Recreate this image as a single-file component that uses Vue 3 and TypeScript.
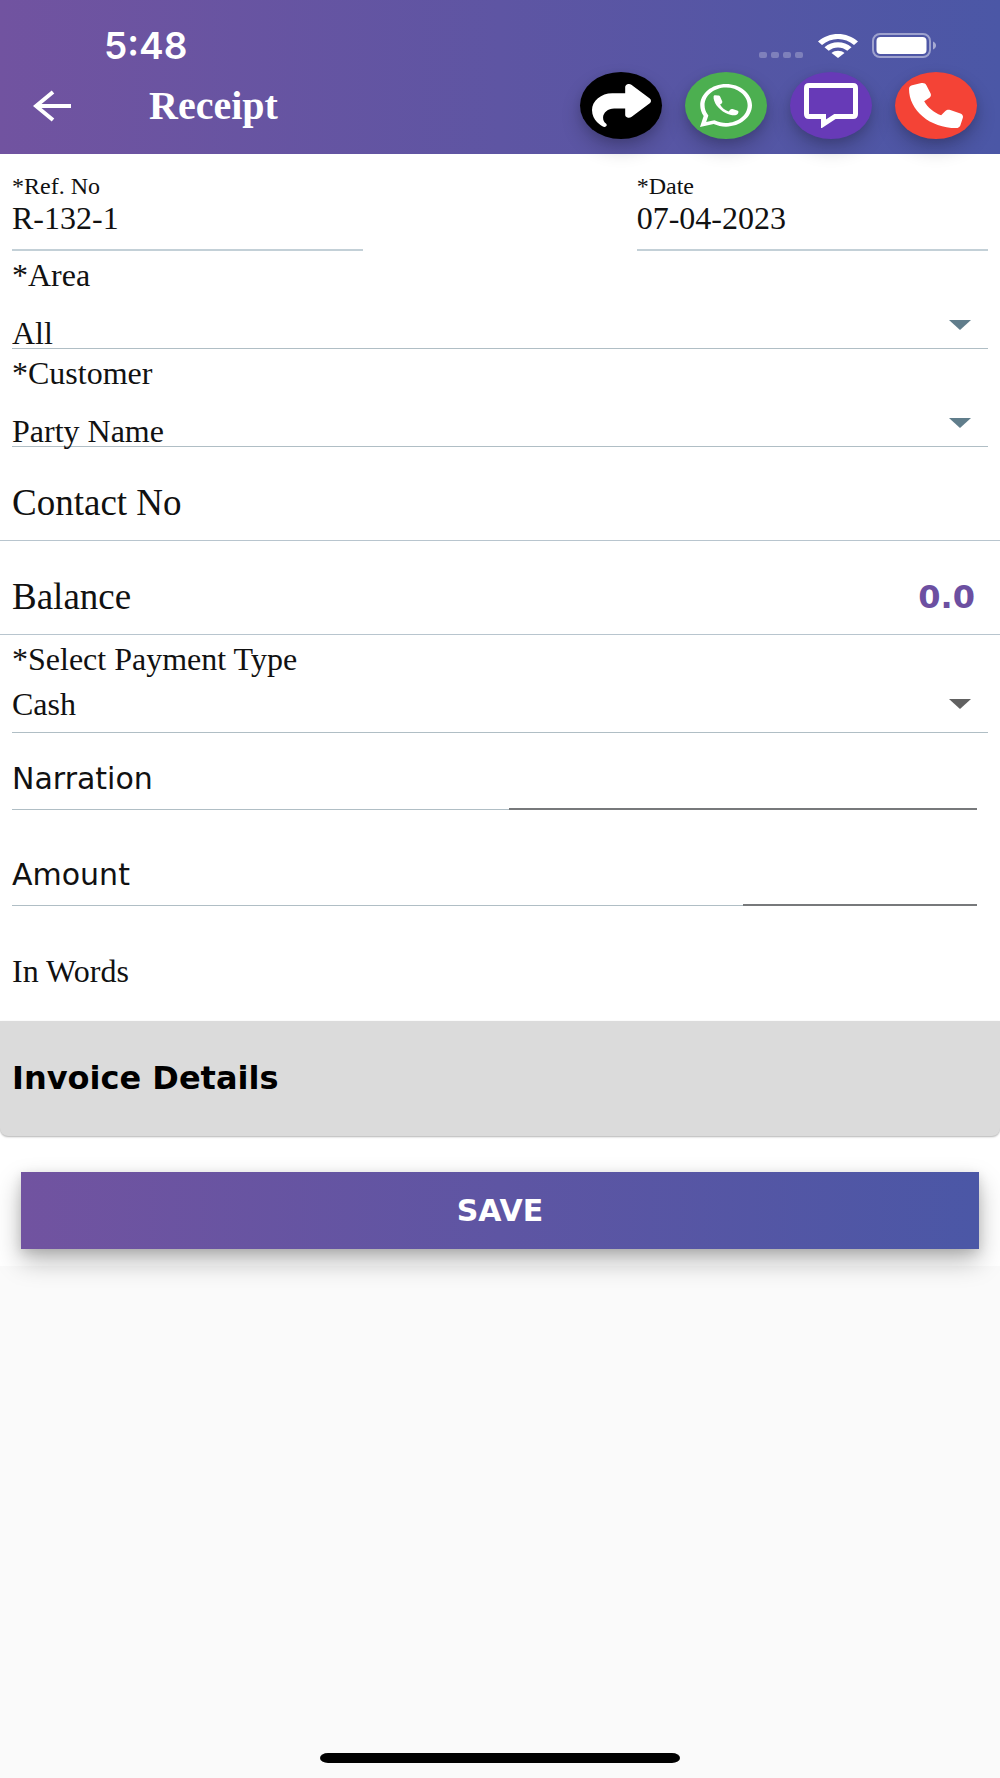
<script setup lang="ts">
import { ref } from 'vue'

const refNo = ref('R-132-1')
const date = ref('07-04-2023')
const area = ref('All')
const customer = ref('Party Name')
const paymentType = ref('Cash')
const narration = ref('')
const amount = ref('')
const balance = ref('0.0')
</script>

<template>
  <div class="screen">
    <header class="header">
      <div class="status">
        <span class="clock">5:48</span>
        <span class="signal" aria-hidden="true"><i></i><i></i><i></i><i></i></span>
        <svg class="wifi" viewBox="0 0 40 24" preserveAspectRatio="none" aria-hidden="true">
          <path d="M0 7.5C11-2.5 29-2.5 40 7.5L36 11C27 3 13 3 4 11Z" />
          <path d="M6.5 13.2C14 6.5 26 6.5 33.5 13.2L29.3 16.8C24 12.3 16 12.3 10.7 16.8Z" />
          <path d="M13.5 19C17 16 23 16 26.5 19L20 24Z" />
        </svg>
        <svg class="battery" viewBox="0 0 64 25" aria-hidden="true">
          <rect x="1" y="1" width="57" height="23" rx="7" fill="none" stroke="#fff" stroke-opacity=".45" stroke-width="2" />
          <rect x="4.5" y="4" width="50" height="17" rx="4" fill="#fff" />
          <path d="M61 8.5C65 10 65 15 61 16.5Z" fill="#fff" fill-opacity=".5" />
        </svg>
      </div>
      <div class="toolbar">
        <button class="back" type="button" aria-label="Back">
          <svg viewBox="0 0 38 32" aria-hidden="true">
            <path d="M20 2 3 16 20 30M3 16H38" fill="none" stroke="#fff" stroke-width="4" />
          </svg>
        </button>
        <h1 class="title">Receipt</h1>
        <div class="actions">
          <button class="action share" type="button" aria-label="Share">
            <svg class="share-icon" viewBox="0 32 512 448" preserveAspectRatio="none" aria-hidden="true">
              <path d="M307 34.8c-11.5 5.1-19 16.6-19 29.2v64H176C78.8 128 0 206.8 0 304C0 417.3 81.5 467.9 100.2 478.1c2.5 1.4 5.3 1.9 8.1 1.9c10.9 0 19.7-8.9 19.7-19.7c0-7.5-4.3-14.4-9.8-19.5C108.8 431.9 96 414.4 96 384c0-53 43-96 96-96h96v64c0 12.6 7.4 24.1 19 29.2s25 3 34.4-5.4l160-144c6.7-6.1 10.6-14.7 10.6-23.8s-3.8-17.7-10.6-23.8l-160-144c-9.4-8.5-22.9-10.6-34.4-5.4z" />
            </svg>
          </button>
          <button class="action whatsapp" type="button" aria-label="WhatsApp">
            <svg class="whatsapp-icon" viewBox="0 32 448 448" preserveAspectRatio="none" aria-hidden="true">
              <path d="M380.9 97.1C339 55.1 283.2 32 223.9 32c-122.4 0-222 99.6-222 222 0 39.1 10.2 77.3 29.6 111L0 480l117.7-30.9c32.4 17.7 68.9 27 106.1 27h.1c122.3 0 224.1-99.6 224.1-222 0-59.3-25.2-115-67.1-157zm-157 341.6c-33.2 0-65.7-8.9-94-25.7l-6.7-4-69.8 18.3L72 359.2l-4.4-7c-18.5-29.4-28.2-63.3-28.2-98.2 0-101.7 82.8-184.5 184.6-184.5 49.3 0 95.6 19.2 130.4 54.1 34.8 34.9 56.2 81.2 56.1 130.5 0 101.8-84.9 184.6-186.6 184.6z" />
              <path d="M117 162C113 219 157 296 220 333C255 354 287 363 311 356C324 352 332 337 331 322C331 315 327 312 320 309L281 293C272 290 266 293 260 300L247 318C213 305 188 279 173 246L187 234C193 228 194 220 191 213L174 166C171 156 165 151 155 151L132 150C122 150 118 154 117 162Z" />
            </svg>
          </button>
          <button class="action message" type="button" aria-label="Message">
            <svg class="message-icon" viewBox="0 0 54 45" aria-hidden="true">
              <path d="M5 2.5H49Q51.5 2.5 51.5 5V31Q51.5 33.5 49 33.5H31L19.5 41V33.5H5Q2.5 33.5 2.5 31V5Q2.5 2.5 5 2.5Z" fill="none" stroke="#fff" stroke-width="5" />
            </svg>
          </button>
          <button class="action call" type="button" aria-label="Call">
            <svg class="call-icon" viewBox="0 0 512 512" preserveAspectRatio="none" aria-hidden="true">
              <path d="M164.9 24.6c-7.7-18.6-28-28.5-47.4-23.2l-88 24C12.1 30.2 0 46 0 64C0 311.4 200.6 512 448 512c18 0 33.8-12.1 38.6-29.5l24-88c5.3-19.4-4.6-39.7-23.2-47.4l-96-40c-16.3-6.8-35.2-2.1-46.3 11.6L304.7 368C234.3 334.7 177.3 277.7 144 207.3L193.3 167c13.7-11.2 18.4-30 11.6-46.3l-40-96z" />
            </svg>
          </button>
        </div>
      </div>
    </header>

    <form class="form" @submit.prevent>
      <div class="pair">
        <div class="field">
          <label class="small-label" for="ref-no">*Ref. No</label>
          <input id="ref-no" v-model="refNo" class="input" type="text" />
        </div>
        <div class="field">
          <label class="small-label" for="date">*Date</label>
          <input id="date" v-model="date" class="input" type="text" />
        </div>
      </div>

      <div class="select-field">
        <label for="area">*Area</label>
        <div class="select-box low">
          <select id="area" v-model="area"><option>All</option></select>
          <svg class="caret" viewBox="0 0 22 10" aria-hidden="true"><path d="M0 0H22L11 10Z" /></svg>
        </div>
      </div>

      <div class="select-field">
        <label for="customer">*Customer</label>
        <div class="select-box low">
          <select id="customer" v-model="customer"><option>Party Name</option></select>
          <svg class="caret" viewBox="0 0 22 10" aria-hidden="true"><path d="M0 0H22L11 10Z" /></svg>
        </div>
      </div>

      <div class="info-row"><span>Contact No</span></div>
      <div class="info-row"><span>Balance</span><output class="balance">{{ balance }}</output></div>

      <div class="select-field">
        <label for="payment">*Select Payment Type</label>
        <div class="select-box">
          <select id="payment" v-model="paymentType"><option>Cash</option></select>
          <svg class="caret dark" viewBox="0 0 22 10" aria-hidden="true"><path d="M0 0H22L11 10Z" /></svg>
        </div>
      </div>

      <div class="entries">
        <div class="entry narration">
          <label for="narration">Narration</label>
          <input id="narration" v-model="narration" type="text" />
        </div>
        <div class="entry amount">
          <label for="amount">Amount</label>
          <input id="amount" v-model="amount" type="text" inputmode="decimal" />
        </div>
      </div>

      <p class="words">In Words</p>
      <h2 class="invoice">Invoice Details</h2>
      <button class="save" type="submit">SAVE</button>
    </form>

    <div class="home-bar"></div>
  </div>
</template>

<style>
body {
  margin: 0;
}
</style>

<style scoped>
* {
  box-sizing: border-box;
}
.screen {
  display: flex;
  flex-direction: column;
  min-height: 100vh;
  background: #fafafa;
  color: #111;
  font: 32px/32px "Liberation Serif", serif;
}
button,
input,
select {
  margin: 0;
  padding: 0;
  border: 0;
  border-radius: 0;
  background: none;
  color: inherit;
  font: inherit;
}
svg {
  display: block;
  fill: #fff;
}
.header {
  position: relative;
  padding-bottom: 15px;
  background: linear-gradient(90deg, #7153a0, #4b57a6);
  color: #fff;
}
.status {
  display: flex;
  height: 72px;
  padding: 30px 64px 14px 104px;
}
.clock {
  margin-right: auto;
  font: 600 37px/32px Inter, sans-serif;
}
.signal {
  display: flex;
  align-self: flex-end;
  gap: 4px;
  margin-right: 15px;
}
.signal i {
  width: 8px;
  height: 6px;
  border-radius: 2px;
  background: rgba(255, 255, 255, 0.25);
}
.wifi {
  align-self: flex-end;
  width: 40px;
  height: 24px;
  margin-right: 14px;
}
.battery {
  align-self: flex-end;
  width: 64px;
  height: 25px;
}
.toolbar {
  display: flex;
  align-items: center;
  height: 67px;
  padding: 0 23px 0 33px;
}
.back {
  width: 38px;
}
.title {
  margin: 0 auto 0 78px;
  font-size: 40px;
  font-weight: 700;
  line-height: 44px;
}
.actions {
  display: flex;
  gap: 23px;
}
.action {
  display: flex;
  align-items: center;
  justify-content: center;
  width: 82px;
  height: 67px;
  border-radius: 50%;
  box-shadow: 0 10px 20px rgba(0, 0, 0, 0.2), 0 3px 8px rgba(0, 0, 0, 0.1);
}
.share {
  background: #000;
}
.whatsapp {
  background: #4caf50;
}
.message {
  background: #673ab7;
}
.call {
  background: #f44336;
}
.share-icon {
  width: 59px;
  height: 43px;
}
.whatsapp-icon {
  width: 52px;
  height: 43px;
}
.message-icon,
.call-icon {
  width: 54px;
  height: 45px;
}
.form {
  padding: 20px 0 17px;
  background: #fff;
}
.pair {
  display: flex;
  justify-content: space-between;
  padding: 0 12px;
}
.field {
  width: 36%;
}
.small-label {
  display: block;
  font-size: 24px;
  line-height: 24px;
}
.input {
  display: block;
  width: 100%;
  height: 53px;
  padding-bottom: 10px;
  border-bottom: 2px solid #c3d0d7;
  outline: 0;
}
.select-field {
  padding: 8px 12px 0;
}
.select-field label {
  display: block;
}
.select-box {
  position: relative;
  height: 58px;
  border-bottom: 1px solid #b0bec5;
}
.select-box select {
  display: block;
  width: 100%;
  height: 57px;
  line-height: 40px;
  appearance: none;
}
.select-box.low select {
  height: 62px;
  padding-top: 22px;
}
.caret {
  position: absolute;
  right: 17px;
  bottom: 18px;
  width: 22px;
  height: 10px;
  fill: #607d8b;
  pointer-events: none;
}
.caret.dark {
  bottom: 23px;
  fill: #616161;
}
.info-row {
  display: flex;
  justify-content: space-between;
  padding: 36px 25px 17px 12px;
  border-bottom: 1px solid #b8c5ce;
  font-size: 37px;
  line-height: 40px;
}
.balance {
  color: #6c4fa1;
  font: 700 32px/40px "DejaVu Sans", sans-serif;
}
.entries {
  display: grid;
  gap: 19px;
  padding: 0 23px 0 12px;
}
.entry {
  display: grid;
  font: 30px/32px "DejaVu Sans", sans-serif;
}
.narration {
  grid-template-columns: 17fr 16fr;
}
.amount {
  grid-template-columns: 25fr 8fr;
}
.entry label {
  padding: 30px 0 14px;
  border-bottom: 1px solid #b0bec5;
}
.entry input {
  width: 100%;
  padding-top: 30px;
  border-bottom: 2px solid #77797b;
  outline: 0;
}
.words {
  margin: 49px 12px 34px;
}
.invoice {
  margin: 0;
  padding: 41px 12px 42px;
  border-radius: 0 0 8px 8px;
  background: #dbdbdb;
  box-shadow: 0 1px 2px rgba(0, 0, 0, 0.3);
  color: #000;
  font: 700 32px/32px "DejaVu Sans", sans-serif;
}
.save {
  display: block;
  width: calc(100% - 42px);
  height: 77px;
  margin: 36px 21px 0;
  background: linear-gradient(90deg, #7153a0, #4b57a6);
  box-shadow: 0 12px 24px rgba(0, 0, 0, 0.28), 0 3px 10px rgba(0, 0, 0, 0.12);
  color: #fff;
  font: 700 30px/32px "DejaVu Sans", sans-serif;
}
.home-bar {
  width: 36%;
  height: 10px;
  margin: auto auto 15px;
  border-radius: 8px / 5px;
  background: #000;
}
</style>
